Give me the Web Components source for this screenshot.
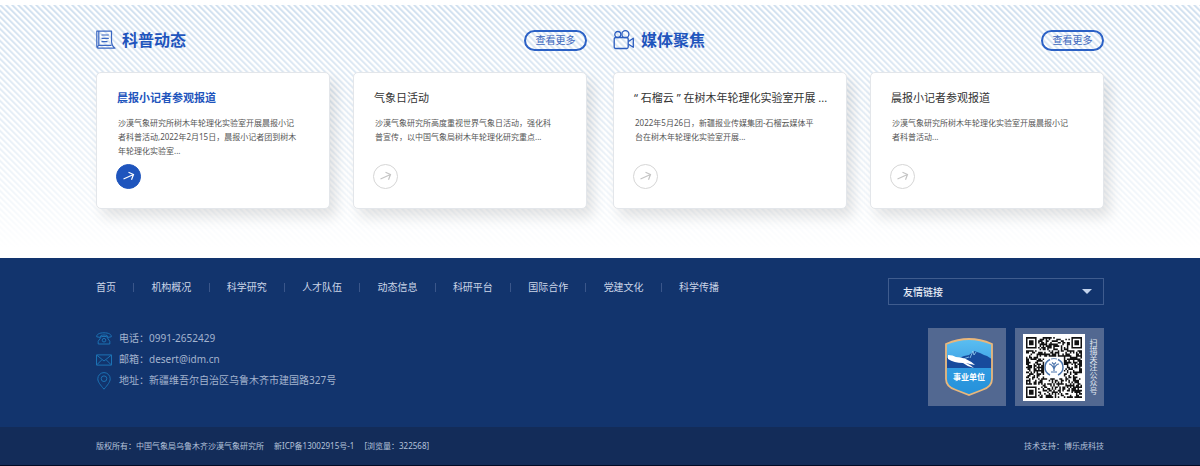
<!DOCTYPE html>
<html lang="zh-CN">
<head>
<meta charset="utf-8">
<meta name="viewport" content="width=device-width, initial-scale=1">
<title>沙漠气象研究所</title>
<style>
  body {
    margin: 0;
    background: #fff;
    font-family: "Noto Sans", "Noto Sans CJK SC", sans-serif;
    --blue: #1f55bd;
    --gutter: 8%;
  }
</style>
</head>
<body>
<news-band>
  <news-panel heading="科普动态" icon="note">
    <news-card active heading="晨报小记者参观报道">沙漠气象研究所树木年轮理化实验室开展晨报小记者科普活动,2022年2月15日，晨报小记者团到树木年轮理化实验室...</news-card>
    <news-card heading="气象日活动">沙漠气象研究所高度重视世界气象日活动，强化科普宣传，以中国气象局树木年轮理化研究重点...</news-card>
  </news-panel>
  <news-panel heading="媒体聚焦" icon="camera">
    <news-card heading="“ 石榴云 ” 在树木年轮理化实验室开展 ...">2022年5月26日，新疆报业传媒集团-石榴云媒体平台在树木年轮理化实验室开展...</news-card>
    <news-card heading="晨报小记者参观报道">沙漠气象研究所树木年轮理化实验室开展晨报小记者科普活动...</news-card>
  </news-panel>
</news-band>
<site-footer>
  <footer-nav slot="nav"></footer-nav>
  <link-select slot="links"></link-select>
  <contact-line slot="contact" icon="phone">电话：0991-2652429</contact-line>
  <contact-line slot="contact" icon="mail">邮箱：desert@idm.cn</contact-line>
  <contact-line slot="contact" icon="pin">地址：新疆维吾尔自治区乌鲁木齐市建国路327号</contact-line>
  <org-badge slot="badges"></org-badge>
  <qr-tile slot="badges">扫描关注公众号</qr-tile>
  <span slot="legal">版权所有：中国气象局乌鲁木齐沙漠气象研究所</span>
  <span slot="legal">新ICP备13002915号-1</span>
  <span slot="legal">[浏览量：322568]</span>
  <span slot="support">技术支持：博乐虎科技</span>
</site-footer>

<script>
const define = (name, render) => customElements.define(name, class extends HTMLElement {
  connectedCallback() {
    if (this.shadowRoot) return;
    this.attachShadow({ mode: 'open' }).innerHTML = render(this);
  }
});

const icons = {
  note: `<svg width="20" height="20" viewBox="0 0 20 20" fill="none" stroke="#3a67c2" stroke-width="1.200" stroke-linejoin="round" aria-hidden="true">
    <path d="M.800 16.500V1.200h14.700v10c.2 3.200 1.200 5.400 3.500 7H3.300C1.500 18.200.8 17.600.8 16.500zM2.800 1.500v13.800h12.700M1.500 16.600l1.300-1.300"/>
    <path d="M5.500 5h7.300M5.500 8.300h7.300M5.500 11.600h6"/></svg>`,
  camera: `<svg width="22" height="20" viewBox="0 0 22 20" fill="none" stroke="#2a5cbf" stroke-width="1.300" stroke-linejoin="round" aria-hidden="true">
    <rect x="1.200" y="7.500" width="14" height="11" rx="1.500"/>
    <circle cx="4.800" cy="4.500" r="3"/><circle cx="12.400" cy="4.200" r="3.500"/>
    <path d="M15.500 11.500l4.800-3.200v9l-4.800-3"/></svg>`,
  phone: `<svg width="16" height="13" viewBox="0 0 16 13" fill="none" stroke="#1c72b4" stroke-linejoin="round" aria-hidden="true">
    <path d="M.700 4.800C.500 2.200 3.500.800 8 .800s7.500 1.400 7.300 4l-3.500.600-.800-2c-2-.5-4-.5-6 0l-.8 2z"/>
    <path d="M5.500 4.500L2.200 9.300V12h11.600V9.300l-3.300-4.800z"/><circle cx="8" cy="8.200" r="1.800"/></svg>`,
  mail: `<svg width="16" height="12" viewBox="0 0 16 12" fill="none" stroke="#1c72b4" aria-hidden="true">
    <path d="M.500.900h15v10.200H.500zM.800 1.200L8 7l7.200-5.800M.800 10.800l5-5M15.200 10.800l-5-5"/></svg>`,
  pin: `<svg width="16" height="18" viewBox="0 0 16 18" fill="none" stroke="#1c72b4" aria-hidden="true">
    <path d="M8 17.200C4.500 13 1.800 10 1.800 6.800a6.200 6.200 0 0 1 12.400 0C14.200 10 11.500 13 8 17.200z"/>
    <circle cx="8" cy="6.700" r="2.800"/></svg>`
};

define('news-band', () => `
  <style>
    :host {
      display: grid;
      grid-template-columns: 1fr 1fr;
      gap: 26px;
      margin-top: 5px;
      padding: 24px var(--gutter) 49px;
      background:
        linear-gradient(to bottom, #fff0 0%, #fff5 30%, #fffb 75%, #fff 96%),
        linear-gradient(45deg, #cfdfef 5%, #fff0 21% 29%, #fff0 34%, #cfdfef 47% 55%, #fff0 71% 84%, #cfdfef 97%) 0 0 / 6px 6px;
    }
  </style>
  <slot></slot>`);

define('news-panel', el => `
  <style>
    :host { display: block; min-width: 0; }
    header { display: flex; align-items: center; height: 22px; }
    svg { flex: none; }
    h2 { margin: 0 auto 0 6px; font-size: 16px; line-height: 22px; font-weight: 700; color: var(--blue); }
    a {
      box-sizing: border-box; width: 63px; height: 21px; border: 2px solid #2b61c6; border-radius: 11px;
      font-size: 10px; line-height: 17px; text-align: center; color: #3c67bd; text-decoration: none;
    }
    .cards { display: grid; grid-template-columns: 1fr 1fr; gap: 23px; margin-top: 21px; }
  </style>
  <header>${icons[el.getAttribute('icon')]}<h2>${el.getAttribute('heading')}</h2><a href="#">查看更多</a></header>
  <div class="cards"><slot></slot></div>`);

define('news-card', el => `
  <style>
    :host {
      display: block; box-sizing: border-box; min-width: 0;
      padding: 15px 19px 19px;
      border: 1px solid #e3e6ea; border-radius: 5px; background: #fff;
      box-shadow: 6px 8px 14px #0000001c;
    }
    h3 { margin: 0 0 8px 1px; font-size: 11px; line-height: 20px; font-weight: 400; color: #333; white-space: nowrap; }
    p { box-sizing: border-box; margin: 0 0 6px 2px; max-width: 180px; min-height: 42px; font-size: 8px; line-height: 14px; color: #555; }
    a {
      display: grid; place-items: center; box-sizing: border-box; width: 25px; height: 25px;
      border: 1px solid #d6d6d6; border-radius: 50%; color: #c4c4c4;
    }
    :host([active]) h3 { color: var(--blue); font-weight: 700; }
    :host([active]) a { background: var(--blue); border-color: var(--blue); color: #fff; }
  </style>
  <h3>${el.getAttribute('heading')}</h3>
  <p><slot></slot></p>
  <a href="#" aria-label="查看详情"><svg width="13" height="11" viewBox="0 0 13 11" fill="none" stroke="currentColor" stroke-width="1.200" aria-hidden="true"><path d="M1.500 8L11.500 3.500M6.500 1.200l5 2.300-2 5.200"/></svg></a>`);

define('site-footer', () => `
  <style>
    :host { display: block; background: #12346d; color: #b4c2da; border-bottom: 1px solid #020a24; }
    .row { display: flex; justify-content: space-between; align-items: flex-start; gap: 24px; padding: 0 var(--gutter); }
    .top { padding-top: 20px; }
    .middle { padding-top: 23px; padding-bottom: 21px; }
    .contacts { display: flex; flex-direction: column; }
    .badges { display: flex; gap: 9px; }
    .bottom { align-items: center; height: 38px; background: #132c59; font-size: 8px; line-height: 14px; }
    .legal { display: flex; gap: 10px; }
  </style>
  <div class="row top"><slot name="nav"></slot><slot name="links"></slot></div>
  <div class="row middle">
    <div class="contacts"><slot name="contact"></slot></div>
    <div class="badges"><slot name="badges"></slot></div>
  </div>
  <div class="row bottom"><div class="legal"><slot name="legal"></slot></div><slot name="support"></slot></div>`);

define('footer-nav', () => `
  <style>
    :host { display: block; flex: 0 1 623px; }
    nav { display: flex; justify-content: space-between; align-items: center; height: 19px; }
    a { font-size: 10px; line-height: 19px; color: #ccd6e8; text-decoration: none; white-space: nowrap; }
    i { width: 1px; height: 9px; background: #3a568a; }
  </style>
  <nav>${['首页', '机构概况', '科学研究', '人才队伍', '动态信息', '科研平台', '国际合作', '党建文化', '科学传播']
    .map(t => `<a href="#">${t}</a>`).join('<i></i>')}</nav>`);

define('link-select', () => `
  <style>
    :host { display: grid; flex: 0 0 216px; align-items: center; }
    select, svg { grid-area: 1 / 1; }
    select {
      appearance: none; box-sizing: border-box; width: 100%; height: 27px; padding: 0 14px; margin: 0;
      border: 1px solid #3f5c8e; border-radius: 0; background: none;
      color: #e6ecf6; font: 500 10px "Noto Sans", "Noto Sans CJK SC", sans-serif;
    }
    svg { justify-self: end; margin-right: 12px; pointer-events: none; }
  </style>
  <select aria-label="友情链接"><option>友情链接</option></select>
  <svg width="10" height="5" viewBox="0 0 10 5" fill="#c3d3ec" aria-hidden="true"><path d="M0 0h10L5 5z"/></svg>`);

define('contact-line', el => `
  <style>
    :host { display: flex; align-items: center; gap: 7px; height: 21px; font-size: 10px; line-height: 21px; color: #a3b3ce; }
    svg { flex: none; }
  </style>
  ${icons[el.getAttribute('icon')]}<span><slot></slot></span>`);

define('org-badge', () => `
  <style>
    :host { display: flex; align-items: center; justify-content: flex-end; box-sizing: border-box; width: 78px; height: 78px; padding-right: 13px; background: #526891; }
    text { font: 700 8px "Noto Sans CJK SC", sans-serif; }
  </style>
  <svg width="48" height="58" viewBox="0 0 48 58">
    <defs>
      <linearGradient id="sky" x1="0" y1="0" x2="0" y2="1">
        <stop offset="0" stop-color="#5cc0f2"/><stop offset=".5" stop-color="#3da0e4"/><stop offset="1" stop-color="#1780cd"/>
      </linearGradient>
      <clipPath id="shield"><path d="M1 6Q13 1 24 1q11 0 23 5v35q0 8-10 11L24 57 11 52Q1 49 1 41z"/></clipPath>
    </defs>
    <g clip-path="url(#shield)">
      <path d="M0 0h48v58H0z" fill="url(#sky)"/>
      <path d="M2 20l6-1 6 1 5-2 5-1 5-4 6 2 4 2 3 1 6 4v8H2z" fill="#174b9d"/>
      <path d="M25 20l3-7 1 4 2-3M18 21l6-2" stroke="#9ad4f4" fill="none" stroke-width=".8"/>
      <path d="M3 17q5 0 8 2 10 0 19 8-6-1-9-2 5 2 8 5-6-1-11-5-9 0-15-4z" fill="#fff"/>
      <path d="M0 30h48v28H0z" fill="#2b98df" opacity=".7"/>
    </g>
    <path d="M1 6Q13 1 24 1q11 0 23 5v35q0 8-10 11L24 57 11 52Q1 49 1 41z" fill="none" stroke="#e9b77c" stroke-width="1.800"/>
    <text x="24" y="42" text-anchor="middle" fill="#fff">事业单位</text>
  </svg>`);

const qrPath = () => {
  const n = 37;
  let seed = 20220526, d = '';
  const next = () => (seed = (seed * 1103515245 + 12345) % 2147483648) / 2147483648;
  const finder = (x, y) => {
    const m = Math.max(Math.abs(x - 3), Math.abs(y - 3));
    return m > 3 ? false : m !== 2;
  };
  for (let y = 0; y < n; y++) for (let x = 0; x < n; x++) {
    let on = next() > 0.46;
    if (x < 8 && y < 8) on = finder(x, y);
    else if (x > n - 9 && y < 8) on = finder(n - 1 - x, y);
    else if (x < 8 && y > n - 9) on = finder(x, n - 1 - y);
    if (x > 11 && x < 25 && y > 11 && y < 25) on = false;
    if (on) d += `M${x} ${y}h1v1h-1z`;
  }
  return d;
};

define('qr-tile', () => `
  <style>
    :host { display: flex; align-items: center; justify-content: space-between; box-sizing: border-box; width: 89px; height: 78px; padding: 0 6px 0 8px; background: #526891; }
    span { writing-mode: vertical-rl; font-size: 8px; line-height: 10px; color: #e2e8f2; }
  </style>
  <svg width="62" height="67" viewBox="0 0 62 67" role="img" aria-label="二维码">
    <path d="M0 0h62v67H0z" fill="#fff"/>
    <svg x="3" y="3" width="56" height="61" viewBox="0 0 37 37" preserveAspectRatio="none"><path d="${qrPath()}" fill="#111"/></svg>
    <g fill="none" stroke="#4b74ac">
      <path d="M27 25.500a8.500 8.500 0 0 0 0 15.500M35 25.500a8.500 8.500 0 0 1 0 15.500" stroke-width="1.500"/>
      <path d="M26 30q3 0 5 5 2-5 5-5M31 31v6M28 38h6M29 28.500l2 2 2-2" stroke-width="1.200"/>
      <path d="M28 25q3-1 6 0" stroke-width=".8"/>
    </g>
  </svg>
  <span><slot></slot></span>`);
</script>
</body>
</html>
